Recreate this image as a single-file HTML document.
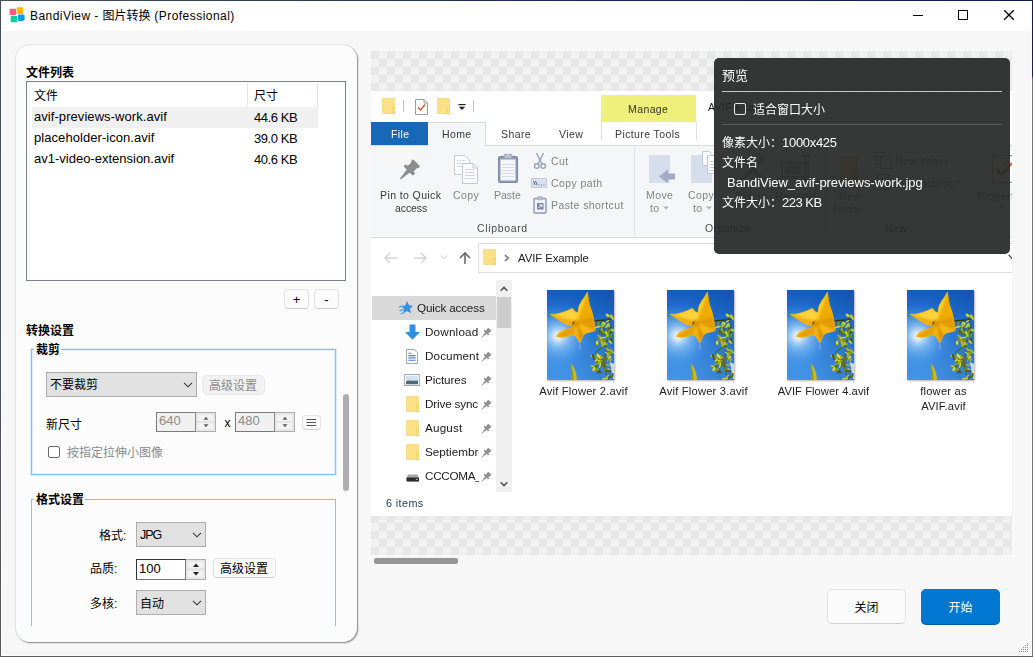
<!DOCTYPE html>
<html lang="zh-CN">
<head>
<meta charset="utf-8">
<title>BandiView - 图片转换 (Professional)</title>
<style>
*{box-sizing:border-box;margin:0;padding:0}
html,body{width:1033px;height:657px;overflow:hidden;background:#f7f7f7}
body{position:relative;font-family:"Liberation Sans","Noto Sans CJK SC",sans-serif;font-size:12px;color:#000}
.a{position:absolute}
.t{position:absolute;white-space:nowrap;line-height:16px;height:16px}
.b{font-weight:bold}
/* window frame */
#frame-t{left:0;top:0;width:1033px;height:1px;background:linear-gradient(90deg,#454f5a 0,#2b3d55 30%,#14264f 60%,#0d1d4c 100%)}
#frame-l{left:0;top:0;width:1px;height:657px;background:linear-gradient(180deg,#454f5a 0,#4a5058 50%,#5a5a5a 100%)}
#frame-r{left:1032px;top:0;width:1px;height:657px;background:linear-gradient(180deg,#0d1d4c 0,#14264f 76px,#747474 79px,#747474 100%)}
#frame-b{left:0;top:656px;width:1033px;height:1px;background:#5e5e5e}
#frame-i{left:1px;top:1px;width:1031px;height:655px;border:1px solid #fdfdfd}
#titlebar{left:1px;top:1px;width:1031px;height:30px;background:#fff}
/* card */
#card{left:16px;top:45px;width:341px;height:597px;background:#fcfcfc;border-radius:14px;box-shadow:0 0 0 1px rgba(0,0,0,.07),1px 1px 1.500px rgba(0,0,0,.42)}
#list{left:26px;top:81px;width:320px;height:200px;background:#fff;border:1px solid #7a808c}
.sel{left:32px;top:107px;width:286px;height:21px;background:#f0f0f0}
.colsep{width:1px;top:83px;height:24px;background:#e5e5e5}
.sbtn{background:#fbfbfb;border:1px solid #e3e3e3;border-bottom-color:#cfcfcf;border-radius:4px}
.gb{border:1px solid #7fc3ff;box-shadow:0 0 0 1px rgba(127,195,255,.28),inset 0 0 0 1px rgba(127,195,255,.22)}
.dd{background:#e1e1e1;border:1px solid #adadad}
.dis{color:#8b8b8b}
.s{position:absolute;white-space:nowrap;line-height:14px;height:14px;font-size:10.5px;letter-spacing:.4px}
.s.c{text-align:center}
.dis2{color:#848484}
.nv{color:#1a1a1a;font-size:11.700px;letter-spacing:.15px}
.th{box-shadow:1px 1px 2px rgba(0,0,0,.3)}
</style>
</head>
<body>
<div class="a" id="titlebar"></div>
<!-- app icon -->
<svg class="a" style="left:9px;top:7px" width="17" height="17" viewBox="0 0 17 17">
<rect x="0.600" y="1.700" width="6.600" height="6.300" rx="0.800" fill="#fb5a7d"/>
<rect x="7.800" y="0.200" width="6.300" height="6.800" rx="0.800" fill="#ffb700"/>
<rect x="1.700" y="8.700" width="6.500" height="6.500" rx="0.800" fill="#04d19b"/>
<path d="M9.700 7.600H14.800Q15.600 7.600 15.600 8.400V12L13.700 13.900H9.700Q8.900 13.900 8.900 13.100V8.400Q8.900 7.600 9.700 7.600Z" fill="#04a0ef"/>
<path d="M13.700 13.900V12.600Q13.700 12 14.300 12H15.600Z" fill="#0b86d6"/>
</svg>
<div class="t" style="left:30px;top:8px;font-size:12px"><span style="letter-spacing:.45px">BandiView - </span>图片转换<span style="letter-spacing:.45px"> (Professional)</span></div>
<!-- caption buttons -->
<svg class="a" style="left:900px;top:1px" width="132" height="30" viewBox="0 0 132 30" fill="none" stroke="#000" stroke-width="1">
<path d="M13 14.5H23"/>
<rect x="58.5" y="9.5" width="9" height="9"/>
<path d="M104.200 9.200L113.800 18.800M113.800 9.200L104.200 18.800" stroke-width="1.350"/>
</svg>

<!-- left card -->
<div class="a" id="card"></div>
<div class="t b" style="left:26px;top:65px">文件列表</div>
<div class="a" id="list"></div>
<div class="a sel"></div>
<div class="a colsep" style="left:247px"></div>
<div class="a colsep" style="left:317px"></div>
<div class="t" style="left:34px;top:88px">文件</div>
<div class="t" style="left:254px;top:88px">尺寸</div>
<div class="t" style="left:34px;top:109px;font-size:13px;letter-spacing:.06px">avif-previews-work.avif</div>
<div class="t" style="left:34px;top:130px;font-size:13px;letter-spacing:.06px">placeholder-icon.avif</div>
<div class="t" style="left:34px;top:151px;font-size:13px">av1-video-extension.avif</div>
<div class="t" style="left:254px;top:110px;font-size:13px;letter-spacing:-.45px">44.6 KB</div>
<div class="t" style="left:254px;top:131px;font-size:13px;letter-spacing:-.45px">39.0 KB</div>
<div class="t" style="left:254px;top:152px;font-size:13px;letter-spacing:-.45px">40.6 KB</div>
<div class="a sbtn" style="left:284px;top:289px;width:25px;height:20px"></div>
<div class="a sbtn" style="left:314px;top:289px;width:25px;height:20px"></div>
<div class="t" style="left:284px;top:292px;width:25px;text-align:center;font-size:13px">+</div>
<div class="t" style="left:314px;top:292px;width:25px;text-align:center;font-size:13px">-</div>

<div class="t b" style="left:26px;top:323px">转换设置</div>
<!-- group 1 -->
<div class="a gb" style="left:31px;top:349px;width:305px;height:126px"></div>
<div class="t b" style="left:34px;top:342px;padding:0 1px 0 2px;background:#fcfcfc">裁剪</div>
<div class="a dd" style="left:46px;top:372px;width:151px;height:25px"></div>
<div class="t" style="left:50px;top:377px">不要裁剪</div>
<svg class="a" style="left:182px;top:381px" width="12" height="8" viewBox="0 0 12 8" fill="none" stroke="#333" stroke-width="1.1"><path d="M2 1.800L6 5.800L10 1.800"/></svg>
<div class="a" style="left:202px;top:375px;width:63px;height:20px;background:#f1f1f1;border:1px solid #e9e9e9;border-radius:5px"></div>
<div class="t dis" style="left:209px;top:378px">高级设置</div>
<div class="t" style="left:46px;top:417px">新尺寸</div>
<!-- spin 640 -->
<div class="a" style="left:156px;top:412px;width:40px;height:20px;background:#f0f0f0;border:1px solid #7a7a7a;border-right-color:#8a8a8a"></div>
<div class="t dis" style="left:159px;top:413px;font-size:13px">640</div>
<div class="a" style="left:196px;top:412px;width:20px;height:20px;background:#f0f0f0;border:1px solid #adadad;border-left:0"></div>
<svg class="a" style="left:196px;top:412px" width="20" height="20" viewBox="0 0 20 20"><rect x="1" y="2" width="17" height="8" fill="#f3f3f3" stroke="#dcdcdc" stroke-width="1"/><rect x="1" y="10" width="17" height="8" fill="#f3f3f3" stroke="#dcdcdc" stroke-width="1"/><path d="M7.500 7.800L10 4.800L12.500 7.800Z M7.500 12.200L10 15.200L12.500 12.200Z" fill="#606060"/></svg>
<div class="t" style="left:224.500px;top:415px;font-size:12px">x</div>
<div class="a" style="left:235px;top:412px;width:40px;height:20px;background:#f0f0f0;border:1px solid #7a7a7a;border-right-color:#8a8a8a"></div>
<div class="t dis" style="left:238px;top:413px;font-size:13px">480</div>
<div class="a" style="left:275px;top:412px;width:20px;height:20px;background:#f0f0f0;border:1px solid #adadad;border-left:0"></div>
<svg class="a" style="left:275px;top:412px" width="20" height="20" viewBox="0 0 20 20"><rect x="1" y="2" width="17" height="8" fill="#f3f3f3" stroke="#dcdcdc" stroke-width="1"/><rect x="1" y="10" width="17" height="8" fill="#f3f3f3" stroke="#dcdcdc" stroke-width="1"/><path d="M7.500 7.800L10 4.800L12.500 7.800Z M7.500 12.200L10 15.200L12.500 12.200Z" fill="#606060"/></svg>
<div class="a sbtn" style="left:302px;top:415px;width:19px;height:15px"></div>
<svg class="a" style="left:302px;top:415px" width="19" height="16" viewBox="0 0 19 16" stroke="#555" stroke-width="1"><path d="M4.500 4.500H14M4.500 7.500H14M4.500 10.500H14"/></svg>
<div class="a" style="left:48px;top:446px;width:12px;height:12px;border:1px solid #6a6a6a;border-radius:2px;background:#fff"></div>
<div class="t dis" style="left:67px;top:445px">按指定拉伸小图像</div>
<!-- card scrollbar -->
<div class="a" style="left:343px;top:394px;width:6px;height:97px;border-radius:3px;background:#aeaeae"></div>
<!-- group 2 -->
<div class="a gb" style="left:31px;top:499px;width:305px;height:140px;border-bottom:0;box-shadow:none;height:127px"></div>
<div class="t b" style="left:34px;top:492px;padding:0 1px 0 2px;background:#fcfcfc">格式设置</div>
<div class="t" style="left:99px;top:528px">格式:</div>
<div class="a dd" style="left:136px;top:522px;width:70px;height:25px"></div>
<div class="t" style="left:140px;top:527px;font-size:12.5px;letter-spacing:-1px">JPG</div>
<svg class="a" style="left:191px;top:531px" width="12" height="8" viewBox="0 0 12 8" fill="none" stroke="#333" stroke-width="1.1"><path d="M2 1.800L6 5.800L10 1.800"/></svg>
<div class="t" style="left:90px;top:561px">品质:</div>
<div class="a" style="left:136px;top:559px;width:50px;height:21px;background:#fff;border:1px solid #333;border-right-color:#777;border-bottom-color:#777"></div>
<div class="t" style="left:139px;top:561px;font-size:13px">100</div>
<div class="a" style="left:186px;top:559px;width:20px;height:21px;background:#f0f0f0;border:1px solid #adadad;border-left:0"></div>
<svg class="a" style="left:186px;top:559px" width="20" height="21" viewBox="0 0 20 21"><rect x="1" y="2" width="17" height="8" fill="#f3f3f3" stroke="#dcdcdc" stroke-width="1"/><rect x="1" y="11" width="17" height="8" fill="#f3f3f3" stroke="#dcdcdc" stroke-width="1"/><path d="M7 8L10 4.5L13 8Z M7 13L10 16.5L13 13Z" fill="#222"/></svg>
<div class="a sbtn" style="left:213px;top:558px;width:63px;height:20px"></div>
<div class="t" style="left:220px;top:561px">高级设置</div>
<div class="t" style="left:90px;top:596px">多核:</div>
<div class="a dd" style="left:136px;top:590px;width:70px;height:25px"></div>
<div class="t" style="left:140px;top:596px">自动</div>
<svg class="a" style="left:191px;top:599px" width="12" height="8" viewBox="0 0 12 8" fill="none" stroke="#333" stroke-width="1.1"><path d="M2 1.800L6 5.800L10 1.800"/></svg>

<!-- preview area -->
<svg class="a" style="left:371px;top:51px" width="641" height="504" shape-rendering="crispEdges">
<defs><pattern id="chk" width="16" height="16" patternUnits="userSpaceOnUse"><rect width="16" height="16" fill="#f0f0f0"/><rect width="8" height="8" fill="#e6e6e6"/><rect x="8" y="8" width="8" height="8" fill="#e6e6e6"/></pattern></defs>
<rect width="641" height="504" fill="url(#chk)"/>
</svg>
<div class="a" id="shot" style="left:371px;top:91px;width:641px;height:425px;overflow:hidden;background:#fff;font-size:12px;color:#3a3a3a"><div class="a" id="shotin" style="left:0;top:0;width:641px;height:425px;will-change:transform">
<svg width="0" height="0" style="position:absolute"><defs>
<g id="fold"><rect x="0.300" y="0.300" width="12.400" height="15.400" rx="0.500" fill="#fbe085" stroke="#f1d26e" stroke-width=".6"/><rect x="10.300" y="9.300" width="2.400" height="6.400" fill="#fce69a" stroke="#eccb5e" stroke-width=".6"/></g>
<g id="pin" fill="#8e8e8e"><g transform="translate(3.900,5.800) rotate(-45) scale(.47)"><path d="M-11.500 -0.500L0 -2.200V2.200L-11.500 0.500Z"/><rect x="-0.500" y="-6.500" width="3.300" height="13" rx="1.200"/><rect x="2" y="-3.900" width="6.500" height="7.800"/><rect x="8" y="-5" width="3" height="10" rx="1.200"/></g></g>
<g id="chev"><path d="M0.700 4.200L4 0.900L7.300 4.200" fill="none" stroke="#505050" stroke-width="1.500"/></g>
<linearGradient id="sky" x1="0" y1="0" x2="0" y2="1"><stop offset="0" stop-color="#1459b8"/><stop offset=".3" stop-color="#2273d3"/><stop offset=".6" stop-color="#3689e0"/><stop offset="1" stop-color="#4596e6"/></linearGradient><linearGradient id="sky2" x1="0" y1="0" x2="1" y2="0"><stop offset="0.300" stop-color="#0a3c96" stop-opacity="0"/><stop offset="1" stop-color="#0a3c96" stop-opacity=".3"/></linearGradient><filter id="fblur" x="-5%" y="-5%" width="110%" height="110%"><feGaussianBlur stdDeviation=".5"/></filter><clipPath id="thclip"><rect x="0" y="0" width="67" height="90"/></clipPath>
<radialGradient id="sun" gradientUnits="userSpaceOnUse" cx="11" cy="46" r="34"><stop offset="0" stop-color="#ffffff" stop-opacity="1"/><stop offset=".1" stop-color="#eaf5ff" stop-opacity=".92"/><stop offset=".35" stop-color="#a9d4fb" stop-opacity=".6"/><stop offset=".7" stop-color="#6fb2f0" stop-opacity=".25"/><stop offset="1" stop-color="#4a9ae8" stop-opacity="0"/></radialGradient>
<clipPath id="flclip"><path d="M40.5 1.9L41.2 8.0L42.4 14.6L44.8 21.2L46.7 29.2L47.8 35.8L48.3 40.5L45.3 41.6L40.2 42.8L36.5 44.8L34.6 48.9L32.9 53.0L31.1 49.7L28.2 45.7L25.4 44.6L20.0 46.6L14.0 47.6L9.2 46.4L12.1 42.4L17.5 39.7L23.6 38.2L26.2 36.3L19.5 34.6L13.0 30.8L7.3 27.0L3.2 24.3L8.0 24.4L15.3 22.6L21.9 20.0L25.3 18.3L27.7 21.2L31.1 22.9L31.7 16.8L34.3 11.7L38.0 6.3Z"/></clipPath><filter id="fblur2" x="-20%" y="-20%" width="140%" height="140%"><feGaussianBlur stdDeviation="1.1"/></filter><g id="flower" clip-path="url(#thclip)"><g filter="url(#fblur)"><rect x="-3" y="-3" width="73" height="96" fill="url(#sky)"/><rect x="-3" y="-3" width="73" height="96" fill="url(#sky2)"/><rect x="-3" y="-3" width="73" height="96" fill="url(#sun)"/><path d="M45.500 31.200C52 30.500 59 30 67 29.200" stroke="#33360f" stroke-width="1.100" fill="none"/><path d="M58 38C58 50 60 58 58 66C56 74 58 82 62 90M58 56C54 58 50 60 48 64M59 70C55 74 52 78 50 84M62 30C63 36 65 42 64 50" stroke="#46521a" stroke-width=".9" fill="none"/><path d="M62 72C64 75 64.500 82 66 89L67.500 89L67.500 74Z" fill="#e4e7ee" opacity=".85"/><ellipse cx="61.1" cy="25.8" rx="3.0" ry="1.4" fill="#cfd23a" transform="rotate(38 61.1 25.8)"/><ellipse cx="65.0" cy="27.2" rx="3.3" ry="1.2" fill="#c6cc2e" transform="rotate(64 65.0 27.2)"/><ellipse cx="61.1" cy="28.3" rx="2.3" ry="0.8" fill="#3f5512" transform="rotate(-40 61.1 28.3)"/><ellipse cx="60.4" cy="35.6" rx="3.2" ry="1.2" fill="#c6cc2e" transform="rotate(-54 60.4 35.6)"/><ellipse cx="62.0" cy="35.8" rx="1.8" ry="0.7" fill="#d9d53c" transform="rotate(59 62.0 35.8)"/><ellipse cx="60.6" cy="31.1" rx="1.9" ry="0.8" fill="#d9d53c" transform="rotate(-29 60.6 31.1)"/><ellipse cx="56.8" cy="33.4" rx="2.0" ry="1.4" fill="#e2dc52" transform="rotate(30 56.8 33.4)"/><ellipse cx="54.5" cy="38.7" rx="1.9" ry="0.8" fill="#7d9216" transform="rotate(-69 54.5 38.7)"/><ellipse cx="55.9" cy="34.9" rx="2.7" ry="1.2" fill="#b9c42a" transform="rotate(-69 55.9 34.9)"/><ellipse cx="55.9" cy="35.1" rx="2.2" ry="1.0" fill="#a9b91f" transform="rotate(32 55.9 35.1)"/><ellipse cx="50.9" cy="36.9" rx="3.3" ry="1.0" fill="#cfd23a" transform="rotate(-15 50.9 36.9)"/><ellipse cx="51.3" cy="33.8" rx="2.6" ry="0.7" fill="#8ea31a" transform="rotate(-72 51.3 33.8)"/><ellipse cx="52.4" cy="42.2" rx="1.8" ry="0.9" fill="#5d7318" transform="rotate(51 52.4 42.2)"/><ellipse cx="55.3" cy="50.5" rx="2.5" ry="1.2" fill="#3f5512" transform="rotate(-62 55.3 50.5)"/><ellipse cx="58.9" cy="42.8" rx="2.1" ry="1.0" fill="#d9d53c" transform="rotate(76 58.9 42.8)"/><ellipse cx="54.6" cy="51.6" rx="3.3" ry="0.9" fill="#cfd23a" transform="rotate(67 54.6 51.6)"/><ellipse cx="63.5" cy="50.2" rx="2.2" ry="1.3" fill="#3f5512" transform="rotate(20 63.5 50.2)"/><ellipse cx="55.0" cy="40.5" rx="1.9" ry="0.7" fill="#cfd23a" transform="rotate(77 55.0 40.5)"/><ellipse cx="59.3" cy="46.4" rx="2.9" ry="0.9" fill="#9fb022" transform="rotate(-39 59.3 46.4)"/><ellipse cx="56.3" cy="47.8" rx="3.2" ry="0.7" fill="#d9d53c" transform="rotate(-1 56.3 47.8)"/><ellipse cx="62.7" cy="51.4" rx="3.3" ry="1.1" fill="#c6cc2e" transform="rotate(46 62.7 51.4)"/><ellipse cx="60.4" cy="50.7" rx="1.7" ry="1.0" fill="#4a6214" transform="rotate(-57 60.4 50.7)"/><ellipse cx="62.7" cy="41.5" rx="2.4" ry="1.0" fill="#5d7318" transform="rotate(36 62.7 41.5)"/><ellipse cx="57.2" cy="51.7" rx="3.2" ry="0.8" fill="#cfd23a" transform="rotate(51 57.2 51.7)"/><ellipse cx="64.1" cy="45.6" rx="2.5" ry="0.9" fill="#7d9216" transform="rotate(-65 64.1 45.6)"/><ellipse cx="52.1" cy="46.5" rx="2.5" ry="0.7" fill="#b9c42a" transform="rotate(47 52.1 46.5)"/><ellipse cx="55.8" cy="41.6" rx="3.0" ry="1.0" fill="#7d9216" transform="rotate(32 55.8 41.6)"/><ellipse cx="60.1" cy="43.9" rx="3.4" ry="1.2" fill="#b9c42a" transform="rotate(73 60.1 43.9)"/><ellipse cx="54.4" cy="42.7" rx="1.6" ry="1.1" fill="#9fb022" transform="rotate(-39 54.4 42.7)"/><ellipse cx="57.4" cy="50.7" rx="2.5" ry="1.2" fill="#7d9216" transform="rotate(-22 57.4 50.7)"/><ellipse cx="53.8" cy="42.3" rx="3.1" ry="0.9" fill="#3f5512" transform="rotate(54 53.8 42.3)"/><ellipse cx="53.4" cy="48.3" rx="2.2" ry="0.8" fill="#d9d53c" transform="rotate(76 53.4 48.3)"/><ellipse cx="62.0" cy="41.2" rx="2.5" ry="1.2" fill="#3f5512" transform="rotate(35 62.0 41.2)"/><ellipse cx="52.6" cy="49.7" rx="3.3" ry="1.1" fill="#7d9216" transform="rotate(69 52.6 49.7)"/><ellipse cx="49.9" cy="52.5" rx="2.7" ry="1.2" fill="#8ea31a" transform="rotate(-75 49.9 52.5)"/><ellipse cx="49.6" cy="53.4" rx="1.9" ry="1.2" fill="#3f5512" transform="rotate(-51 49.6 53.4)"/><ellipse cx="56.3" cy="55.7" rx="2.0" ry="0.7" fill="#b9c42a" transform="rotate(-58 56.3 55.7)"/><ellipse cx="56.4" cy="54.4" rx="2.6" ry="1.0" fill="#9fb022" transform="rotate(-23 56.4 54.4)"/><ellipse cx="50.1" cy="53.0" rx="2.0" ry="1.3" fill="#e2dc52" transform="rotate(-79 50.1 53.0)"/><ellipse cx="57.4" cy="53.9" rx="3.2" ry="1.2" fill="#a9b91f" transform="rotate(7 57.4 53.9)"/><ellipse cx="61.4" cy="40.3" rx="2.1" ry="1.1" fill="#7d9216" transform="rotate(72 61.4 40.3)"/><ellipse cx="65.6" cy="40.1" rx="2.4" ry="1.3" fill="#b9c42a" transform="rotate(22 65.6 40.1)"/><ellipse cx="61.8" cy="41.3" rx="2.3" ry="1.0" fill="#8ea31a" transform="rotate(-48 61.8 41.3)"/><ellipse cx="61.6" cy="39.5" rx="3.2" ry="0.7" fill="#4a6214" transform="rotate(-62 61.6 39.5)"/><ellipse cx="62.1" cy="67.1" rx="2.2" ry="1.3" fill="#e2dc52" transform="rotate(10 62.1 67.1)"/><ellipse cx="53.5" cy="71.6" rx="2.1" ry="1.4" fill="#8ea31a" transform="rotate(-19 53.5 71.6)"/><ellipse cx="53.6" cy="67.7" rx="3.4" ry="1.0" fill="#b9c42a" transform="rotate(-13 53.6 67.7)"/><ellipse cx="61.2" cy="68.5" rx="3.3" ry="0.8" fill="#9fb022" transform="rotate(-76 61.2 68.5)"/><ellipse cx="53.2" cy="66.3" rx="2.1" ry="1.2" fill="#a9b91f" transform="rotate(52 53.2 66.3)"/><ellipse cx="51.1" cy="70.7" rx="2.0" ry="1.0" fill="#5d7318" transform="rotate(-74 51.1 70.7)"/><ellipse cx="56.7" cy="73.1" rx="3.4" ry="0.9" fill="#5d7318" transform="rotate(17 56.7 73.1)"/><ellipse cx="49.6" cy="69.2" rx="3.2" ry="1.3" fill="#8ea31a" transform="rotate(-77 49.6 69.2)"/><ellipse cx="55.2" cy="75.5" rx="2.2" ry="0.9" fill="#5d7318" transform="rotate(4 55.2 75.5)"/><ellipse cx="53.1" cy="75.3" rx="3.1" ry="0.8" fill="#cfd23a" transform="rotate(-79 53.1 75.3)"/><ellipse cx="49.6" cy="72.1" rx="3.2" ry="1.1" fill="#e2dc52" transform="rotate(-77 49.6 72.1)"/><ellipse cx="51.5" cy="66.3" rx="3.3" ry="1.2" fill="#e2dc52" transform="rotate(57 51.5 66.3)"/><ellipse cx="50.5" cy="71.0" rx="2.9" ry="1.3" fill="#c6cc2e" transform="rotate(-5 50.5 71.0)"/><ellipse cx="56.8" cy="70.4" rx="3.0" ry="1.1" fill="#5d7318" transform="rotate(23 56.8 70.4)"/><ellipse cx="59.6" cy="68.4" rx="2.5" ry="1.1" fill="#b9c42a" transform="rotate(0 59.6 68.4)"/><ellipse cx="51.9" cy="68.8" rx="2.6" ry="0.7" fill="#7d9216" transform="rotate(37 51.9 68.8)"/><ellipse cx="60.0" cy="63.6" rx="2.8" ry="0.7" fill="#c6cc2e" transform="rotate(35 60.0 63.6)"/><ellipse cx="63.7" cy="69.9" rx="1.7" ry="1.3" fill="#9fb022" transform="rotate(-44 63.7 69.9)"/><ellipse cx="58.2" cy="67.6" rx="3.2" ry="1.4" fill="#5d7318" transform="rotate(32 58.2 67.6)"/><ellipse cx="60.7" cy="75.1" rx="2.3" ry="0.8" fill="#a9b91f" transform="rotate(19 60.7 75.1)"/><ellipse cx="46.2" cy="76.3" rx="2.9" ry="0.9" fill="#c6cc2e" transform="rotate(11 46.2 76.3)"/><ellipse cx="49.8" cy="72.4" rx="1.8" ry="1.0" fill="#4a6214" transform="rotate(-29 49.8 72.4)"/><ellipse cx="47.0" cy="78.2" rx="2.8" ry="1.3" fill="#7d9216" transform="rotate(-57 47.0 78.2)"/><ellipse cx="52.3" cy="81.9" rx="2.5" ry="1.3" fill="#4a6214" transform="rotate(8 52.3 81.9)"/><ellipse cx="50.2" cy="79.5" rx="2.0" ry="1.3" fill="#8ea31a" transform="rotate(-34 50.2 79.5)"/><ellipse cx="51.7" cy="72.8" rx="2.4" ry="1.0" fill="#a9b91f" transform="rotate(-59 51.7 72.8)"/><ellipse cx="49.2" cy="76.6" rx="2.8" ry="0.8" fill="#4a6214" transform="rotate(-60 49.2 76.6)"/><ellipse cx="47.0" cy="79.1" rx="2.4" ry="1.4" fill="#cfd23a" transform="rotate(-62 47.0 79.1)"/><ellipse cx="65.0" cy="84.8" rx="1.7" ry="0.8" fill="#9fb022" transform="rotate(72 65.0 84.8)"/><ellipse cx="61.4" cy="79.8" rx="1.8" ry="1.3" fill="#d9d53c" transform="rotate(-1 61.4 79.8)"/><ellipse cx="63.0" cy="87.0" rx="2.2" ry="0.9" fill="#4a6214" transform="rotate(-26 63.0 87.0)"/><ellipse cx="58.5" cy="79.7" rx="2.3" ry="1.2" fill="#7d9216" transform="rotate(-22 58.5 79.7)"/><ellipse cx="61.3" cy="80.9" rx="3.1" ry="1.1" fill="#4a6214" transform="rotate(14 61.3 80.9)"/><ellipse cx="60.6" cy="86.1" rx="1.7" ry="0.7" fill="#d9d53c" transform="rotate(-50 60.6 86.1)"/><ellipse cx="65.5" cy="85.2" rx="2.5" ry="1.2" fill="#5d7318" transform="rotate(-79 65.5 85.2)"/><ellipse cx="58.2" cy="88.6" rx="3.3" ry="0.9" fill="#d9d53c" transform="rotate(-6 58.2 88.6)"/><ellipse cx="47.7" cy="68.0" rx="2.3" ry="1.0" fill="#8ea31a" transform="rotate(60 47.7 68.0)"/><ellipse cx="46.1" cy="66.7" rx="3.1" ry="1.2" fill="#a9b91f" transform="rotate(27 46.1 66.7)"/><ellipse cx="46.5" cy="67.1" rx="3.3" ry="1.0" fill="#3f5512" transform="rotate(70 46.5 67.1)"/><ellipse cx="65.0" cy="61.4" rx="3.1" ry="0.8" fill="#b9c42a" transform="rotate(45 65.0 61.4)"/><ellipse cx="62.4" cy="64.2" rx="2.9" ry="0.8" fill="#a9b91f" transform="rotate(-47 62.4 64.2)"/><ellipse cx="60.8" cy="59.5" rx="2.7" ry="1.3" fill="#9fb022" transform="rotate(33 60.8 59.5)"/><ellipse cx="62.2" cy="63.5" rx="2.1" ry="1.2" fill="#8ea31a" transform="rotate(34 62.2 63.5)"/><path d="M24 73C27 77 30 83 29.800 90L25 90C24 84 23.500 78 24 73Z" fill="#c4bd27"/><path d="M24 73C25.500 78 26.500 84 26.500 90L25 90C24 84 23.500 78 24 73Z" fill="#8f931c"/><path d="M40.5 1.9L41.2 8.0L42.4 14.6L44.8 21.2L46.7 29.2L47.8 35.8L48.3 40.5L45.3 41.6L40.2 42.8L36.5 44.8L34.6 48.9L32.9 53.0L31.1 49.7L28.2 45.7L25.4 44.6L20.0 46.6L14.0 47.6L9.2 46.4L12.1 42.4L17.5 39.7L23.6 38.2L26.2 36.3L19.5 34.6L13.0 30.8L7.3 27.0L3.2 24.3L8.0 24.4L15.3 22.6L21.9 20.0L25.3 18.3L27.7 21.2L31.1 22.9L31.7 16.8L34.3 11.7L38.0 6.3Z" fill="#f5b50c" stroke="#f5b50c" stroke-width=".7" stroke-linejoin="round"/><g clip-path="url(#flclip)" filter="url(#fblur2)"><path d="M30.0 32.0L31.1 22.9L31.7 16.8L34.3 11.7L38.0 6.3L40.5 1.9Z" fill="#ffd535" opacity="1"/><path d="M30.0 32.0L40.5 1.9L41.2 8.0L42.4 14.6L44.8 21.2L46.0 26.0Z" fill="#efab05" opacity="1"/><path d="M30.0 32.0L31.1 22.9L27.7 21.2L25.3 18.3L21.9 20.0L15.3 22.6L8.0 24.4L3.2 24.3Z" fill="#ffd338" opacity="1"/><path d="M30.0 32.0L3.2 24.3L7.3 27.0L13.0 30.8L19.5 34.6L26.2 36.3Z" fill="#f2ae0a" opacity="1"/><path d="M30.0 32.0L26.2 36.3L23.6 38.2L17.5 39.7L12.1 42.4L9.2 46.4Z" fill="#fdc929" opacity="1"/><path d="M30.0 32.0L9.2 46.4L14.0 47.6L20.0 46.6L25.4 44.6Z" fill="#e79f04" opacity="1"/><path d="M30.0 32.0L25.4 44.6L28.2 45.7L31.1 49.7L32.9 53.0Z" fill="#f3b112" opacity="1"/><path d="M30.0 32.0L32.9 53.0L34.6 48.9L36.5 44.8Z" fill="#d98f00" opacity="1"/><path d="M30.0 32.0L36.5 44.8L40.2 42.8L45.3 41.6L48.3 40.5Z" fill="#f6b814" opacity="1"/><path d="M30.0 32.0L48.3 40.5L47.8 35.8L46.7 29.2L46.0 26.0Z" fill="#e29a02" opacity="1"/><circle cx="29" cy="33" r="3.500" fill="#c97f00" opacity=".55"/></g><path d="M26 31L27.600 31.800C27.300 33 26.500 34.300 25.500 35.300L24.800 34.800C25.500 33.600 25.900 32.300 26 31Z" fill="#7d520c"/><path d="M32.900 52.600L33.300 59L32.500 59Z" fill="#f7dc78"/></g></g>
</defs></svg>
<!-- quick access toolbar -->
<svg class="a" style="left:11px;top:7px" width="13" height="16"><use href="#fold"/></svg>
<div class="a" style="left:32px;top:9px;width:1px;height:12px;background:#c2c2c2"></div>
<svg class="a" style="left:44px;top:7px" width="13" height="17" viewBox="0 0 13 17"><path d="M0.500 1.500H9L12.500 5V16.500H0.500Z" fill="#fff" stroke="#9c9c9c"/><path d="M9 1.500V5H12.500" fill="none" stroke="#9c9c9c"/><path d="M3 9.500L5.500 12L10 6.500" fill="none" stroke="#e2542e" stroke-width="1.500"/></svg>
<svg class="a" style="left:66px;top:7px" width="13" height="16"><use href="#fold"/></svg>
<svg class="a" style="left:87px;top:12px" width="8" height="8" viewBox="0 0 8 8"><rect x="0.500" y="1" width="7" height="1.200" fill="#222"/><path d="M0.800 3.800H7.200L4 7Z" fill="#222"/></svg>
<div class="a" style="left:102px;top:9px;width:1px;height:12px;background:#c2c2c2"></div>
<!-- manage tab -->
<div class="a" style="left:230px;top:4px;width:95px;height:27px;background:#efef7c"></div>
<div class="s" style="left:257px;top:11px;color:#333">Manage</div>
<div class="s" style="left:337px;top:9px;color:#222">AVIF Example</div>
<!-- tabs -->
<div class="a" style="left:0;top:54px;width:641px;height:93px;background:#f5f6f7;border-top:1px solid #dadbdc;border-bottom:1px solid #dadbdc"></div>
<div class="a" style="left:0;top:31px;width:57px;height:23px;background:#1868b7"></div>
<div class="s" style="left:20px;top:36px;color:#fff">File</div>
<div class="a" style="left:57px;top:31px;width:58px;height:24px;background:#f5f6f7;border:1px solid #dadbdc;border-bottom:0;border-left:0"></div>
<div class="s" style="left:71px;top:36px">Home</div>
<div class="s" style="left:130px;top:36px">Share</div>
<div class="s" style="left:188px;top:36px">View</div>
<div class="a" style="left:230px;top:31px;width:96px;height:19px;border-left:1px solid #e2e2e2;border-right:1px solid #e2e2e2;background:#fff"></div>
<div class="s" style="left:244px;top:36px">Picture Tools</div>
<!-- ribbon: clipboard -->
<svg class="a" style="left:29px;top:67px" width="22" height="22" viewBox="0 0 10 10"><use href="#pin"/></svg>
<div class="s" style="left:9px;top:97px">Pin to Quick</div>
<div class="s" style="left:24px;top:110px;letter-spacing:-.1px">access</div>
<svg class="a" style="left:82px;top:64px" width="26" height="29" viewBox="0 0 26 29"><path d="M1.500 0.500H12L16.500 5V19.500H1.500Z" fill="#fbfcfe" stroke="#c3cbdd"/><path d="M4 5.500H13M4 8.500H13M4 11.500H9" stroke="#d5dbe8"/><path d="M9.500 8.500H20L24.500 13V28.500H9.500Z" fill="#fbfcfe" stroke="#bfc7da"/><path d="M20 8.500V13H24.500" fill="none" stroke="#bfc7da"/><path d="M12 14.500H21M12 17.500H22M12 20.500H22M12 23.500H22" stroke="#cfd5e3"/></svg>
<div class="s dis2" style="left:82px;top:97px">Copy</div>
<svg class="a" style="left:126px;top:62px" width="22" height="31" viewBox="0 0 22 31"><rect x="1.500" y="3.500" width="19" height="26" rx="1" fill="#8f98b5" stroke="#8189a8"/><rect x="3.500" y="6.500" width="15" height="21" fill="#f4f7fc"/><path d="M5 11.500H17M5 14.500H17M5 17.500H17M5 20.500H17M5 23.500H17" stroke="#d3daea"/><rect x="7" y="1.500" width="8" height="4" rx="1" fill="#b9bfd2" stroke="#9aa2bb"/><circle cx="11" cy="1.800" r="1.300" fill="#c9cedd"/></svg>
<div class="s dis2" style="left:123px;top:97px;letter-spacing:0">Paste</div>
<div class="s" style="left:106px;top:130px;color:#4c4c4c;letter-spacing:.65px">Clipboard</div>
<svg class="a" style="left:162px;top:61px" width="14" height="18" viewBox="0 0 14 18" fill="none" stroke="#9ba3bd" stroke-width="1.400"><path d="M3.500 1L9 12M10.500 1L5 12"/><circle cx="3.800" cy="14" r="2.300"/><circle cx="10.200" cy="14" r="2.300"/></svg>
<div class="s dis2" style="left:180px;top:63px">Cut</div>
<svg class="a" style="left:160px;top:87px" width="16" height="10" viewBox="0 0 16 10"><rect x="0.500" y="0.500" width="15" height="9" fill="#d9dfee" stroke="#c4cbe0"/><path d="M2.500 3L4 7M4.500 3L6 7M7.500 7H8.500M10 7H11M12.500 7H13.500" stroke="#5f6788" stroke-width="1"/></svg>
<div class="s dis2" style="left:180px;top:85px">Copy path</div>
<svg class="a" style="left:162px;top:105px" width="14" height="18" viewBox="0 0 14 18"><rect x="1" y="2.500" width="12" height="14.500" rx="1" fill="#f1f4fa" stroke="#8d96b4" stroke-width="1.400"/><rect x="4.500" y="0.800" width="5" height="3" rx="0.800" fill="#b9bfd2" stroke="#9aa2bb" stroke-width=".8"/><rect x="4" y="7" width="6.500" height="6.500" fill="#7d86a6"/><path d="M5.500 12L8.500 9M6.500 8.800H8.800V11" fill="none" stroke="#fff" stroke-width="1"/></svg>
<div class="s dis2" style="left:180px;top:107px">Paste shortcut</div>
<div class="a" style="left:263px;top:56px;width:1px;height:88px;background:#e2e3e4"></div>
<!-- organize -->
<svg class="a" style="left:277px;top:63px" width="28" height="30" viewBox="0 0 28 30"><rect x="1" y="1" width="21" height="28" fill="#d6ddec"/><path d="M27 19.500V25.500H20V29.500L11 22.500L20 15.500V19.500Z" fill="#a1aac8"/></svg>
<div class="s dis2" style="left:275px;top:97px">Move</div>
<div class="s dis2" style="left:279px;top:110px">to</div>
<svg class="a" style="left:292px;top:115px" width="6" height="4"><path d="M0 0.500H6L3 3.500Z" fill="#b0b0b0"/></svg>
<svg class="a" style="left:319px;top:60px" width="30" height="33" viewBox="0 0 30 33"><rect x="1" y="4" width="21" height="28" fill="#d6ddec"/><path d="M12.500 0.500H19L22.500 4V14.500H12.500Z" fill="#fbfcfe" stroke="#bfc7da"/><path d="M17.500 4.500H25L29.500 9V22.500H17.500Z" fill="#fbfcfe" stroke="#bfc7da"/><path d="M19.500 10.500H27M19.500 13.500H27M19.500 16.500H27M19.500 19.500H27" stroke="#c5ccdc"/></svg>
<div class="s dis2" style="left:317px;top:97px">Copy</div>
<div class="s dis2" style="left:322px;top:110px">to</div>
<svg class="a" style="left:335px;top:115px" width="6" height="4"><path d="M0 0.500H6L3 3.500Z" fill="#b0b0b0"/></svg>
<div class="s" style="left:334px;top:130px;color:#4c4c4c">Organize</div>
<!-- under panel (ghost) -->
<svg class="a" style="left:368px;top:63px" width="28" height="30" viewBox="0 0 28 30" fill="none" stroke="#9a9a9a" stroke-width="3"><path d="M3 3L25 27M25 3L3 27"/></svg>
<div class="s dis2" style="left:364px;top:98px">Delete</div>
<svg class="a" style="left:410px;top:64px" width="32" height="26" viewBox="0 0 32 26" fill="none" stroke="#9a9a9a" stroke-width="1.500"><rect x="1" y="8" width="26" height="14"/><rect x="5" y="12" width="14" height="6" fill="#b8b8b8"/><path d="M20 1H28M24 1V25M20 25H28"/></svg>
<div class="s dis2" style="left:404px;top:98px">Rename</div>
<div class="a" style="left:453px;top:56px;width:1px;height:88px;background:#e2e3e4"></div>
<svg class="a" style="left:469px;top:65px" width="18" height="26"><rect width="18" height="26" fill="#f7d774"/><rect x="14" y="14" width="4" height="12" fill="#eec04a"/></svg>
<div class="s dis2" style="left:468px;top:98px">New</div>
<div class="s dis2" style="left:463px;top:111px">folder</div>
<svg class="a" style="left:504px;top:61px" width="17" height="17" viewBox="0 0 17 17" fill="#fbfcfe" stroke="#9aa2bb"><rect x="0.500" y="0.500" width="9" height="11"/><rect x="5.500" y="4.500" width="11" height="12"/></svg>
<div class="s dis2" style="left:524px;top:63px">New item</div>
<svg class="a" style="left:573px;top:68px" width="6" height="4"><path d="M0 0.500H6L3 3.500Z" fill="#b0b0b0"/></svg>
<svg class="a" style="left:504px;top:83px" width="17" height="17" viewBox="0 0 17 17" fill="#fbfcfe" stroke="#9aa2bb"><rect x="2.500" y="0.500" width="11" height="15"/></svg>
<div class="s dis2" style="left:524px;top:85px;letter-spacing:0">Easy access</div>
<svg class="a" style="left:584px;top:90px" width="6" height="4"><path d="M0 0.500H6L3 3.500Z" fill="#b0b0b0"/></svg>
<div class="s" style="left:514px;top:130px;color:#4c4c4c">New</div>
<div class="a" style="left:599px;top:56px;width:1px;height:88px;background:#e2e3e4"></div>
<svg class="a" style="left:621px;top:64px" width="24" height="28" viewBox="0 0 24 28"><rect x="0.500" y="0.500" width="23" height="27" fill="#fff" stroke="#9a9a9a"/><path d="M5 14L10 20L20 8" fill="none" stroke="#d9623a" stroke-width="2.200"/></svg>
<div class="s dis2" style="left:606px;top:98px">Properties</div>
<svg class="a" style="left:628px;top:115px" width="6" height="4"><path d="M0 0.500H6L3 3.500Z" fill="#b0b0b0"/></svg>
<!-- address bar -->
<svg class="a" style="left:12px;top:160px" width="92" height="14" viewBox="0 0 92 14" fill="none">
<path d="M14 7H2M7 2L2 7L7 12" stroke="#d2d2d2" stroke-width="1.300"/>
<path d="M31 7H43M38 2L43 7L38 12" stroke="#d2d2d2" stroke-width="1.300"/>
<path d="M58 4.500L61 7.500L64 4.500" stroke="#dcdcdc" stroke-width="1.200"/>
<path d="M82 13V2M77 7L82 2L87 7" stroke="#6b6b6b" stroke-width="1.600"/>
</svg>
<div class="a" style="left:107px;top:152px;width:560px;height:30px;border:1px solid #dcdcdc;background:#fff"></div>
<svg class="a" style="left:112px;top:158px" width="13" height="16" viewBox="0 0 13 16"><use href="#fold"/></svg>
<svg class="a" style="left:133px;top:163px" width="6" height="8" viewBox="0 0 6 8" fill="none" stroke="#7a7a7a" stroke-width="1.600"><path d="M1 1.200L4.200 4L1 6.800"/></svg>
<div class="s" style="left:147px;top:160px;color:#222;font-size:11.400px;letter-spacing:-.1px">AVIF Example</div>
<svg class="a" style="left:637px;top:163px" width="8" height="6" viewBox="0 0 8 6" fill="none" stroke="#555" stroke-width="1.300"><path d="M0.700 0.800L4 4.500L7.300 0.800"/></svg>
<!-- nav pane -->
<div class="a" style="left:1px;top:205px;width:124px;height:24px;background:#d9d9d9"></div>
<svg class="a" style="left:27px;top:210px" width="15" height="14" viewBox="0 0 15 14"><path d="M9.200 0L11 4.300L15 4.800L12 7.700L12.900 12.200L9 10L5 12.400L6.100 7.800L3 4.900L7.200 4.400Z" fill="#3592e2"/><path d="M1 6.200L4.500 5.200M1.500 9.800L5.500 8.300M3 13L6 11.500" stroke="#4fa2e8" stroke-width="1.300"/></svg>
<div class="s nv" style="left:46px;top:210px;letter-spacing:-.16px">Quick access</div>
<svg class="a" style="left:33px;top:233px" width="17" height="17" viewBox="0 0 17 17"><path d="M5.500 0.500H11.500V8H16L8.500 15.800L1 8H5.500Z" fill="#2f8fe0"/></svg>
<div class="s nv" style="left:54px;top:234px;letter-spacing:.18px">Downloads</div>
<svg class="a" style="left:35px;top:257.500px" width="12" height="15" viewBox="0 0 13 16"><path d="M0.500 0.500H9L12.500 4V15.500H0.500Z" fill="#fff" stroke="#8f9bb0"/><path d="M2.500 4.500H6M2.500 7H10.500M2.500 9.500H10.500M2.500 12H10.500" stroke="#3f86d8" stroke-width="1.200"/></svg>
<div class="s nv" style="left:54px;top:258px;letter-spacing:.1px">Documents</div>
<svg class="a" style="left:33px;top:283px" width="16" height="12" viewBox="0 0 17 13"><rect x="0.500" y="0.500" width="16" height="12" fill="#fff" stroke="#9aa0ab"/><rect x="2" y="2" width="13" height="9" fill="#cfe3f2"/><path d="M2 11V8C5 5.500 9 8.500 15 7V11Z" fill="#4d6b72"/></svg>
<div class="s nv" style="left:54px;top:282px;letter-spacing:-.09px">Pictures</div>
<svg class="a" style="left:35px;top:305px" width="13" height="16" viewBox="0 0 13 16"><use href="#fold"/></svg>
<div class="s nv" style="left:54px;top:306px;letter-spacing:-.16px">Drive sync</div>
<svg class="a" style="left:35px;top:329px" width="13" height="16" viewBox="0 0 13 16"><use href="#fold"/></svg>
<div class="s nv" style="left:54px;top:330px;letter-spacing:.17px">August</div>
<svg class="a" style="left:35px;top:353px" width="13" height="16" viewBox="0 0 13 16"><use href="#fold"/></svg>
<div class="s nv" style="left:54px;top:354px;letter-spacing:0px">Septiembre</div>
<svg class="a" style="left:34.500px;top:383px" width="13.500" height="8" viewBox="0 0 15 9"><path d="M2.500 0.500H12.500L14.500 4V8.500H0.500V4Z" fill="#a8a8a8"/><rect x="0.500" y="4" width="14" height="4.500" rx="0.800" fill="#2e2e2e"/><rect x="11" y="5.500" width="2" height="1.200" fill="#9fe26a"/></svg>
<div class="s nv" style="left:54px;top:378px;letter-spacing:-.27px">CCCOMA_X64</div>
<div class="a" style="left:108px;top:230px;width:17px;height:170px;background:#fff"></div>
<svg class="a" style="left:111px;top:236px" width="10.500" height="10.500" viewBox="0 0 10 10"><use href="#pin"/></svg>
<svg class="a" style="left:111px;top:260px" width="10.500" height="10.500" viewBox="0 0 10 10"><use href="#pin"/></svg>
<svg class="a" style="left:111px;top:284px" width="10.500" height="10.500" viewBox="0 0 10 10"><use href="#pin"/></svg>
<svg class="a" style="left:111px;top:308px" width="10.500" height="10.500" viewBox="0 0 10 10"><use href="#pin"/></svg>
<svg class="a" style="left:111px;top:332px" width="10.500" height="10.500" viewBox="0 0 10 10"><use href="#pin"/></svg>
<svg class="a" style="left:111px;top:356px" width="10.500" height="10.500" viewBox="0 0 10 10"><use href="#pin"/></svg>
<svg class="a" style="left:111px;top:380px" width="10.500" height="10.500" viewBox="0 0 10 10"><use href="#pin"/></svg>
<!-- nav scrollbar -->
<div class="a" style="left:125px;top:189px;width:16px;height:212px;background:#f0f0f0"></div>
<div class="a" style="left:126px;top:206px;width:14px;height:31px;background:#cdcdcd"></div>
<svg class="a" style="left:129px;top:195px" width="8" height="6" viewBox="0 0 8 5"><use href="#chev"/></svg>
<svg class="a" style="left:129px;top:390px" width="8" height="6" viewBox="0 0 8 5"><g transform="translate(0,5) scale(1,-1)"><use href="#chev"/></g></svg>
<!-- thumbnails -->
<svg class="a th" style="left:176px;top:199px" width="67" height="90"><use href="#flower"/></svg>
<svg class="a th" style="left:296px;top:199px" width="67" height="90"><use href="#flower"/></svg>
<svg class="a th" style="left:416px;top:199px" width="67" height="90"><use href="#flower"/></svg>
<svg class="a th" style="left:536px;top:199px" width="67" height="90"><use href="#flower"/></svg>
<div class="s c" style="left:152px;top:293px;width:121px;color:#222;font-size:11.200px;letter-spacing:.2px">Avif Flower 2.avif</div>
<div class="s c" style="left:272px;top:293px;width:121px;color:#222;font-size:11.200px;letter-spacing:.2px">Avif Flower 3.avif</div>
<div class="s c" style="left:392px;top:293px;width:121px;color:#222;font-size:11.200px;letter-spacing:.05px">AVIF Flower 4.avif</div>
<div class="s c" style="left:512px;top:293px;width:121px;color:#222;font-size:11.200px;letter-spacing:.22px">flower as</div>
<div class="s c" style="left:512px;top:308px;width:121px;color:#222;font-size:11.200px;letter-spacing:.13px">AVIF.avif</div>
<div class="s" style="left:15px;top:405px;color:#1e395b;font-size:10.800px;letter-spacing:.4px">6 items</div>
</div>
</div>
<!-- h scrollbar -->
<div class="a" style="left:374px;top:558px;width:84px;height:6px;border-radius:2px;background:#959595"></div>
<!-- info panel -->
<div class="a" id="panel" style="left:714px;top:58px;width:296px;height:196px;border-radius:5px;background:rgba(38,39,39,.925);color:#fff">
<div class="t" style="left:8px;top:10px;font-size:13px">预览</div>
<div class="a" style="left:8px;top:33px;width:280px;height:1px;background:#c4c4c4"></div>
<div class="a" style="left:20px;top:45px;width:12px;height:12px;border:1px solid #e8e8e8;border-radius:2px"></div>
<div class="t" style="left:39px;top:44px">适合窗口大小</div>
<div class="a" style="left:8px;top:66px;width:280px;height:1px;background:#5c5c5c"></div>
<div class="t" style="left:8px;top:77px">像素大小：<span style="font-size:13px;letter-spacing:-.3px">1000x425</span></div>
<div class="t" style="left:8px;top:97px">文件名</div>
<div class="t" style="left:13px;top:117px;font-size:13px;letter-spacing:-.04px">BandiView_avif-previews-work.jpg</div>
<div class="t" style="left:8px;top:137px">文件大小：<span style="font-size:13px;letter-spacing:-.5px">223 KB</span></div>
</div>


<!-- bottom buttons -->
<div class="a" style="left:827px;top:589px;width:79px;height:35px;background:#fbfbfb;border:1px solid #e2e2e2;border-bottom-color:#cfcfcf;border-radius:5px"></div>
<div class="t" style="left:827px;top:600px;width:79px;text-align:center">关闭</div>
<div class="a" style="left:921px;top:589px;width:79px;height:35px;background:#0078d2;border-radius:5px;box-shadow:0 1px 0 #0a5ea8"></div>
<div class="t" style="left:921px;top:600px;width:79px;text-align:center;color:#fff">开始</div>
<!-- grip -->
<svg class="a" style="left:1018px;top:642px" width="11" height="11" viewBox="0 0 11 11" fill="#8c8c8c">
<rect x="9" y="1" width="1" height="1"/>
<rect x="7" y="3" width="1" height="1"/><rect x="9" y="3" width="1" height="1"/>
<rect x="5" y="5" width="1" height="1"/><rect x="7" y="5" width="1" height="1"/><rect x="9" y="5" width="1" height="1"/>
<rect x="3" y="7" width="1" height="1"/><rect x="5" y="7" width="1" height="1"/><rect x="7" y="7" width="1" height="1"/><rect x="9" y="7" width="1" height="1"/>
<rect x="1" y="9" width="1" height="1"/><rect x="3" y="9" width="1" height="1"/><rect x="5" y="9" width="1" height="1"/><rect x="7" y="9" width="1" height="1"/><rect x="9" y="9" width="1" height="1"/>
</svg>

<!-- frame -->
<div class="a" id="frame-i" style="pointer-events:none"></div>
<div class="a" id="frame-t"></div><div class="a" id="frame-l"></div><div class="a" id="frame-r"></div><div class="a" id="frame-b"></div>
</body>
</html>
